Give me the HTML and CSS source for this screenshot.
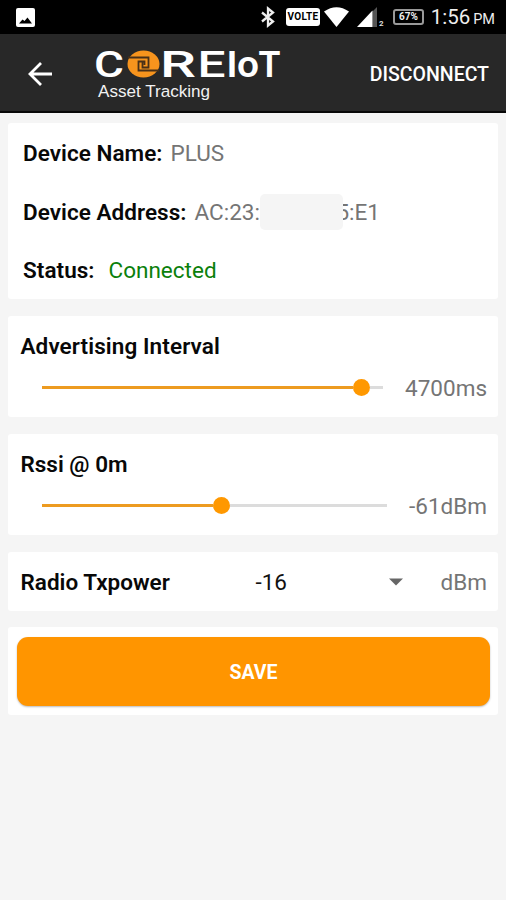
FILE: index.html
```html
<!DOCTYPE html>
<html lang="en">
<head>
<meta charset="utf-8">
<title>CoreIoT Asset Tracking</title>
<link rel="stylesheet" href="styles.css">
</head>
<body>
<div class="statusbar">
  <svg class="picture" width="19" height="19" viewBox="0 0 19 19"><rect width="19" height="19" rx="2" fill="#fff"/><path d="M3 15.500l3.500-4 2 1.500 3-3.500 4.500 6z" fill="#000"/></svg>
  <svg class="bluetooth" width="14" height="20" viewBox="0 0 14 20" fill="none" stroke="#eee" stroke-width="2.300"><path d="M1 5.500L12 14.500 7 18.500V1.500L12 5.500 1 14.500"/></svg>
  <span class="volte">VOLTE</span>
  <svg class="wifi" width="25" height="20" viewBox="0 0 25 20"><path d="M0 4.500Q12.500-4 25 4.500L12.500 20z" fill="#fff"/></svg>
  <svg class="signal" width="28" height="20" viewBox="0 0 28 20"><path d="M15.500 4.500L20 0V20H15.500z" fill="#555"/><path d="M0 20L15.500 3.500V20z" fill="#fff"/><text x="22" y="19" class="sim">2</text></svg>
  <span class="battery">67%</span>
  <span class="clock">1:56<small>PM</small></span>
</div>
<header class="appbar">
  <svg class="back" width="24" height="24" viewBox="0 0 24 24" fill="none" stroke="#fff" stroke-width="2.800"><path d="M24 12H2M13 1L2 12l11 11"/></svg>
  <div class="brand">
    <svg width="188" height="38" viewBox="0 -4 188 38" class="logo">
      <text x="-1" y="28" textLength="30" lengthAdjust="spacingAndGlyphs">C</text>
      <ellipse cx="48.500" cy="15" rx="16" ry="13.500" fill="#f7941d"/>
      <path d="M33 8.500H53.500V18.500H47.500V13M64 21.500H43.500V12.500H49.500V16" fill="none" stroke="#493018" stroke-width="1.800"/>
      <text x="65" y="28" textLength="36" lengthAdjust="spacingAndGlyphs">R</text>
      <text x="102.500" y="28" textLength="28" lengthAdjust="spacingAndGlyphs">E</text>
      <text class="heavy" x="131.500" y="28" textLength="11" lengthAdjust="spacingAndGlyphs">I</text>
      <text class="heavy" x="142" y="28" textLength="22" lengthAdjust="spacingAndGlyphs">o</text>
      <text class="heavy" x="163.500" y="28" textLength="22" lengthAdjust="spacingAndGlyphs">T</text>
    </svg>
    <div class="tagline">Asset Tracking</div>
  </div>
  <div class="disconnect">DISCONNECT</div>
</header>
<main>
  <section class="card device">
    <div class="row"><b>Device Name:</b><span>PLUS</span></div>
    <div class="row"><b>Device Address:</b><span>AC:23:</span><i class="mask"></i><span class="tail"><span>5:E1</span></span></div>
    <div class="row"><b>Status:</b><span class="connected">Connected</span></div>
  </section>
  <section class="card setting">
    <b class="wide">Advertising Interval</b>
    <div class="control"><div class="slider interval"><div class="fill"></div><div class="thumb"></div><div class="rest"></div></div><span>4700ms</span></div>
  </section>
  <section class="card setting">
    <b>Rssi @ 0m</b>
    <div class="control"><div class="slider rssi"><div class="fill"></div><div class="thumb"></div><div class="rest"></div></div><span>-61dBm</span></div>
  </section>
  <section class="card power">
    <b>Radio Txpower</b><span class="value">-16</span>
    <svg width="14" height="8" viewBox="0 0 14 8"><path d="M0 .5H14L7 7.500z" fill="#666"/></svg>
    <span class="unit">dBm</span>
  </section>
  <section class="card action"><button>SAVE</button></section>
</main>
</body>
</html>
```
FILE: styles.css
```css
* { box-sizing: border-box; }
body { margin: 0; height: 900px; background: #f5f5f5; font: 400 22.5px/30px Roboto, "Liberation Sans", sans-serif; color: #757575; overflow: hidden; }
b { font-weight: 600; color: #080808; white-space: nowrap; }
svg { display: block; flex: none; overflow: visible; }
.statusbar { height: 34px; background: #000; display: flex; align-items: center; padding: 0 11px 0 16px; color: #eee; }
.bluetooth { margin-left: 226px; }
.volte { width: 34px; height: 18px; margin-left: 11px; border-radius: 3px; background: #fff; color: #000; font: 700 10px/18px Roboto, sans-serif; letter-spacing: .3px; text-align: center; }
.wifi { margin-left: 4px; }
.signal { margin-left: 8px; }
.sim { font: 700 8px Roboto, sans-serif; fill: #ddd; }
.battery { width: 31px; height: 16px; margin-left: 8px; border: 2px solid #999; border-radius: 3px; font: 700 10px/12px Roboto, sans-serif; text-align: center; }
.clock { margin-left: auto; padding-top: 2px; font-size: 20.5px; line-height: 32px; white-space: nowrap; }
.clock small { font-size: 14.5px; margin-left: 3px; }
.appbar { height: 79px; background: #282828; border-bottom: 2px solid #080808; display: flex; align-items: center; padding: 0 17px 0 28px; color: #fff; }
.back { margin-top: 2px; }
.brand { margin-left: 43px; height: 100%; padding-top: 11px; }
.logo text { font: 500 36px Roboto, sans-serif; fill: #fff; }
.logo .heavy { font-weight: 600; }
.tagline { margin: -1px 0 0 3px; font: 400 17.1px/20px "Liberation Sans", sans-serif; color: #f2f2f2; }
.disconnect { margin-left: auto; font-size: 19.5px; font-weight: 500; padding-top: 4px; }
main { padding: 10px 8px 0; display: flex; flex-direction: column; gap: 17px; }
.card { background: #fff; border-radius: 3px; }
.device { height: 176px; padding: 15px 15px 0; display: flex; flex-direction: column; gap: 28.5px; }
.row { display: flex; height: 30px; }
.row b { margin-right: 8px; letter-spacing: .05px; }
.mask { width: 83px; height: 36px; margin-top: -3px; background: #f5f5f5; border-radius: 5px; }
.tail { width: 37px; overflow: hidden; display: flex; justify-content: flex-end; }
.connected { color: #0b800b; margin-left: 6px; }
.setting { height: 101px; padding: 14.500px 11px 0 12.500px; }
.setting b { display: block; }
.setting .wide { letter-spacing: .1px; }
.control { display: flex; justify-content: space-between; margin: 12.500px 0 0 21.500px; }
.slider { display: flex; align-items: center; height: 29px; }
.fill { height: 3px; background: #ed9b20; }
.thumb { width: 17px; height: 17px; border-radius: 50%; background: #ff9800; }
.rest { height: 3px; background: #dcdcdc; }
.interval .fill { width: 311px; }
.interval .rest { width: 13px; }
.rssi .fill { width: 171px; }
.rssi .rest { width: 157px; }
.power { height: 59px; padding: 0 11px 0 12.500px; display: flex; align-items: center; }
.power b { width: 235px; }
.power .value { width: 133.500px; color: #111; }
.unit { margin-left: auto; }
.action { height: 88px; padding: 10px 8px 0 9px; margin-top: -1px; }
button { display: block; width: 100%; height: 69px; border: 0; border-radius: 11px; background: #ff9500; box-shadow: 0 1px 2px #bbb; color: #fff; font: 700 19.5px/71px Roboto, sans-serif; padding: 0; }
```
